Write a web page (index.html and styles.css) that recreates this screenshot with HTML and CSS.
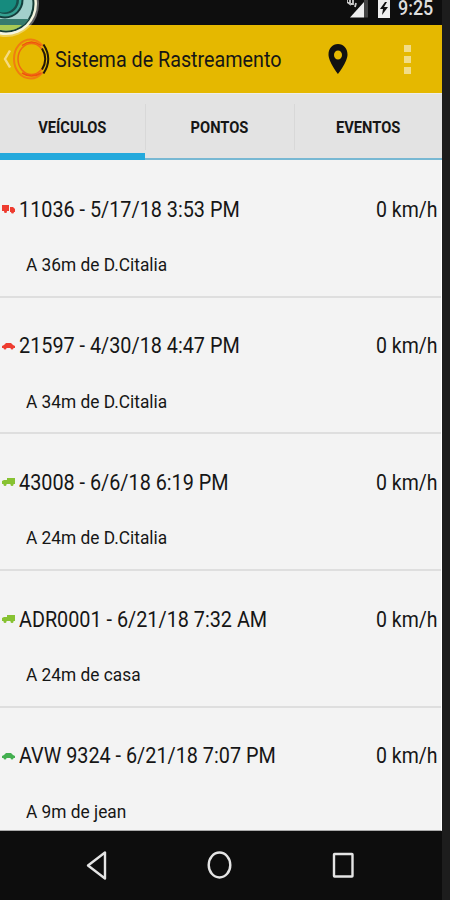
FILE: index.html
```html
<!DOCTYPE html>
<html lang="pt">
<head>
<meta charset="utf-8">
<title>Sistema de Rastreamento</title>
<link rel="stylesheet" href="styles.css">
</head>
<body>
<div class="phone">
  <div class="status">
    <svg class="status-icons" width="56" height="25" viewBox="0 0 56 25">
      <path d="M17 2v15.500H3z" fill="#eee"/><path d="M17 0h4v17.500h-4z" fill="#444"/>
      <path d="M0 0v2l3 2V0M4 4h2V0M9 3l-1 4" fill="none" stroke="#ccc" stroke-width="1.800"/>
      <path d="M31 0h12v18H31z" fill="#eee"/><path d="M38 2l-5 7h3l-1 6 6-8h-4l3-5z" fill="#111"/>
    </svg>
    <span class="clock">9:25</span>
  </div>
  <svg class="badge" width="42" height="38" viewBox="0 0 42 38">
    <circle cx="6" cy="4" r="33" fill="#fff" opacity=".35"/>
    <circle cx="6" cy="4" r="31" fill="#f4f5df"/>
    <circle cx="6" cy="4" r="28.500" fill="#153c35"/>
    <circle cx="6" cy="4" r="26.500" fill="#a2d0cb"/>
    <path d="M1 19h28q-7 11-23 11.500L0 30v-11z" fill="#367b6e"/>
    <path d="M0 25h22q-6 5.500-16 5.500L0 30z" fill="#a9c954"/>
    <circle cx="5" cy="0" r="18.500" fill="#123d3b"/>
    <circle cx="5" cy="0" r="16.500" fill="#35a091"/>
    <circle cx="5" cy="0" r="14" fill="#174f4b"/>
    <circle cx="4" cy="0" r="12.500" fill="#168b7e"/>
  </svg>
  <header class="bar">
    <svg class="brand" width="52" height="68" viewBox="0 0 52 68">
      <path d="M10 25.500l-5 8.500 5 8.500" fill="none" stroke="#f6db80" stroke-width="2.400"/>
      <g fill="none" stroke-width="2">
        <path d="M43 21C39 16.500 35 14.500 31 14.500 21 14.500 14 23 14 34s7 19.500 17 19.500c4 0 8-2 12-6.500" stroke="#ef7d10"/>
        <ellipse cx="31.500" cy="34" rx="13.500" ry="15.500" stroke="#ef6a13" stroke-width="1.500"/>
        <path d="M22 20.500q9.500-7 19 0M22 48q9.500 6 19 0" stroke="#f0520f" stroke-width="1.500"/>
        <path d="M43.500 19.500q9.500 14.500 0 29M42 23.500q6.500 10.500 0 21" stroke="#221a08"/>
      </g>
    </svg>
    <h1 class="title">Sistema de Rastreamento</h1>
    <svg class="pin" width="20" height="30" viewBox="0 0 20 30">
      <path fill="#111" fill-rule="evenodd" d="M10 0C4.500 0 .500 4.500.500 10.500.500 18 10 30 10 30s9.500-12 9.500-19.500C19.500 4.500 15.500 0 10 0zm0 6.500a4 4.500 0 1 1 0 9 4 4.500 0 0 1 0-9z"/>
    </svg>
    <div class="more"><i></i><i></i><i></i></div>
  </header>
  <nav class="tabs">
    <div class="tab active"><span>VEÍCULOS</span></div>
    <div class="tab"><span>PONTOS</span></div>
    <div class="tab"><span>EVENTOS</span></div>
  </nav>
  <main class="list">
    <article class="row">
      <div class="line"><svg class="icon red" viewBox="0 0 13 10"><path d="M0 1h7v6H0zM8 3h3l2 2v3H8z"/><circle cx="3.500" cy="7.500" r="1.500"/><circle cx="10.500" cy="8" r="1.500"/></svg><span class="name">11036 - 5/17/18 3:53 PM</span><span class="speed">0 km/h</span></div>
      <p class="place">A 36m de D.Citalia</p>
    </article>
    <article class="row">
      <div class="line"><svg class="icon red" viewBox="0 0 13 10"><path d="M0 5l2-1 2-2h5l2 2 2 1v2H0z"/><circle cx="3" cy="7" r="1.500"/><circle cx="10" cy="7" r="1.500"/></svg><span class="name">21597 - 4/30/18 4:47 PM</span><span class="speed">0 km/h</span></div>
      <p class="place">A 34m de D.Citalia</p>
    </article>
    <article class="row">
      <div class="line"><svg class="icon lime" viewBox="0 0 13 10"><path d="M5 1h8v6H0V4l2-1h3z"/><circle cx="3" cy="7.500" r="1.500"/><circle cx="10" cy="7.500" r="1.500"/></svg><span class="name">43008 - 6/6/18 6:19 PM</span><span class="speed">0 km/h</span></div>
      <p class="place">A 24m de D.Citalia</p>
    </article>
    <article class="row">
      <div class="line"><svg class="icon lime" viewBox="0 0 13 10"><path d="M5 1h8v6H0V4l2-1h3z"/><circle cx="3" cy="7.500" r="1.500"/><circle cx="10" cy="7.500" r="1.500"/></svg><span class="name">ADR0001 - 6/21/18 7:32 AM</span><span class="speed">0 km/h</span></div>
      <p class="place">A 24m de casa</p>
    </article>
    <article class="row">
      <div class="line"><svg class="icon green" viewBox="0 0 13 10"><path d="M0 5l2-1 2-2h5l2 2 2 1v2H0z"/><circle cx="3" cy="7" r="1.500"/><circle cx="10" cy="7" r="1.500"/></svg><span class="name">AVW 9324 - 6/21/18 7:07 PM</span><span class="speed">0 km/h</span></div>
      <p class="place">A 9m de jean</p>
    </article>
  </main>
  <footer class="nav">
    <svg width="442" height="69" viewBox="0 0 442 69" fill="none" stroke="#e4e4e4" stroke-width="2.400">
      <path d="M105 21.500v26L88 34.500z" stroke-linejoin="round"/>
      <ellipse cx="219.500" cy="34" rx="10.800" ry="12.500"/>
      <rect x="334" y="23" width="18.500" height="22.500" rx=".5"/>
    </svg>
  </footer>
</div>
</body>
</html>
```
FILE: styles.css
```css
* { box-sizing: border-box; }
body { margin: 0; background: #1d1d1d; font-family: Roboto, sans-serif; color: #161616; }
.phone { position: relative; width: 442px; height: 900px; overflow: hidden; background: #f3f3f3; display: flex; flex-direction: column; }
.status { height: 25px; flex: none; background: #0e0e0e; display: flex; justify-content: flex-end; }
.status-icons { margin-right: -5px; flex: none; }
.clock { width: 44px; color: #dedede; font-size: 19.500px; line-height: 17px; font-weight: 500; transform: scaleX(.92); transform-origin: 0 0; white-space: nowrap; }
.badge { position: absolute; left: 0; top: 0; z-index: 2; }
.bar { height: 68px; flex: none; background: #e5b800; display: flex; align-items: center; }
.brand { flex: none; }
.title { width: 276px; margin: 2px 0 0 3px; font-size: 22px; font-weight: 400; line-height: 30px; white-space: nowrap; transform: scaleX(.897); transform-origin: 0 50%; }
.pin { margin-left: -3px; flex: none; }
.more { margin-left: 56px; display: flex; flex-direction: column; gap: 4px; }
.more i { width: 7px; height: 7px; background: #f2dc88; }
.tabs { height: 67px; flex: none; background: #e3e3e3; display: grid; grid-template-columns: 145px 149px 148px; border-top: 1px solid #eeede8; }
.tab { position: relative; display: flex; align-items: center; justify-content: center; border-bottom: 2px solid #78b8d3; font-size: 16.500px; font-weight: 700; }
.tab span { display: block; transform: scaleX(.89); padding-top: 3px; }
.tab.active { border-bottom: 7px solid #24a9dc; }
.tab.active span { padding-top: 8px; transform: scaleX(.89); }
.tab + .tab::before { content: ""; position: absolute; left: 0; top: 10px; width: 1px; height: 46px; background: #d8d8d8; }
.list { height: 671px; flex: none; overflow: hidden; border-right: 1px solid #fff; border-bottom: 1px solid #aaa; }
.row { height: 136.750px; padding-top: 33px; border-bottom: 2px solid #dedede; }
.row:first-child { height: 137.500px; padding-top: 34px; }
.line { height: 30px; display: flex; align-items: center; font-size: 22px; }
.icon { width: 13px; height: 10px; margin: 0 4px 0 2px; flex: none; }
.red { fill: #ee3c30; }
.lime { fill: #87c232; }
.green { fill: #43af50; }
.name, .speed { white-space: nowrap; transform: scaleX(.9); transform-origin: 0 50%; }
.speed { margin-left: auto; margin-right: 4px; transform: scaleX(.885); transform-origin: 100% 50%; }
.place { margin: 28px 0 0 26px; font-size: 19px; line-height: 26px; white-space: nowrap; transform: scaleX(.911); transform-origin: 0 50%; }
.nav { height: 69px; flex: none; background: #0d0d0d; }
.nav svg { display: block; }
```
